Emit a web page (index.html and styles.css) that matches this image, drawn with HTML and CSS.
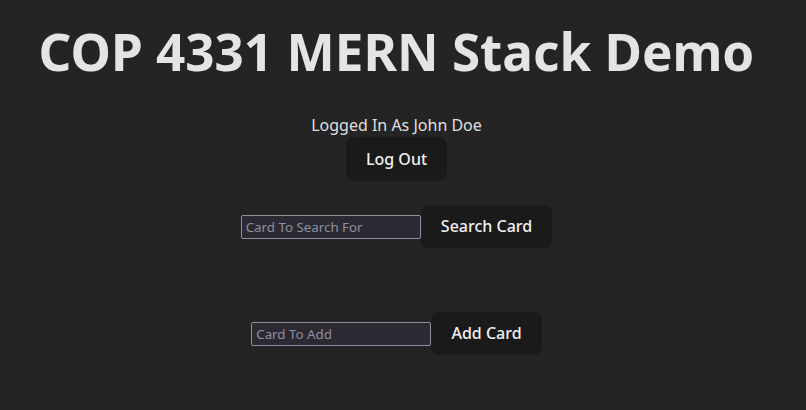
FILE: index.html
```html
<!DOCTYPE html>
<html lang="en">
<head>
<meta charset="utf-8">
<title>COP 4331 MERN Stack Demo</title>
<link rel="stylesheet" href="styles.css">
</head>
<body>
<div class="app">
  <h1 class="title">COP 4331 MERN Stack Demo</h1>
  <div class="user">
    <span class="user-name">Logged In As John Doe</span>
    <button type="button" class="btn">Log Out</button>
  </div>
  <div class="row search-row">
    <input type="text" class="field" placeholder="Card To Search For">
    <button type="button" class="btn">Search Card</button>
  </div>
  <div class="row add-row">
    <input type="text" class="field" placeholder="Card To Add">
    <button type="button" class="btn">Add Card</button>
  </div>
</div>
</body>
</html>
```

FILE: styles.css
```css
html, body {
  margin: 0;
  padding: 0;
}
body {
  background: #242424;
  color: rgba(255, 255, 255, 0.87);
  font-family: "Noto Sans", sans-serif;
  font-size: 16px;
  line-height: 1.5;
  width: 806px;
  height: 410px;
  overflow: hidden;
}
.app {
  display: flex;
  flex-direction: column;
  align-items: center;
  padding-top: 23px;
  padding-right: 13px;
}
.title {
  margin: 0;
  font-size: 51.2px;
  line-height: 1.1;
  font-weight: 700;
  color: #e4e4e4;
}
.user {
  display: flex;
  flex-direction: column;
  align-items: center;
  margin-top: 34px;
}
.user-name {
  font-size: 16px;
}
.btn {
  background: #1a1a1a;
  color: #f0f0f0;
  border: 1px solid transparent;
  border-radius: 8px;
  padding: 0.6em 1.2em;
  font-family: inherit;
  font-size: 16px;
  line-height: normal;
  font-weight: 500;
}
.row {
  display: flex;
  align-items: baseline;
}
.search-row {
  margin-top: 24px;
}
.add-row {
  margin-top: 64px;
}
.field {
  box-sizing: border-box;
  width: 180px;
  height: 24px;
  background: #2b2a33;
  border: 1px solid #8f8f9d;
  border-radius: 2px;
  color: #fbfbfe;
  font-family: inherit;
  font-size: 13.33px;
  padding: 1px 4px;
}
.field::placeholder {
  color: #8f8f9d;
}
```
